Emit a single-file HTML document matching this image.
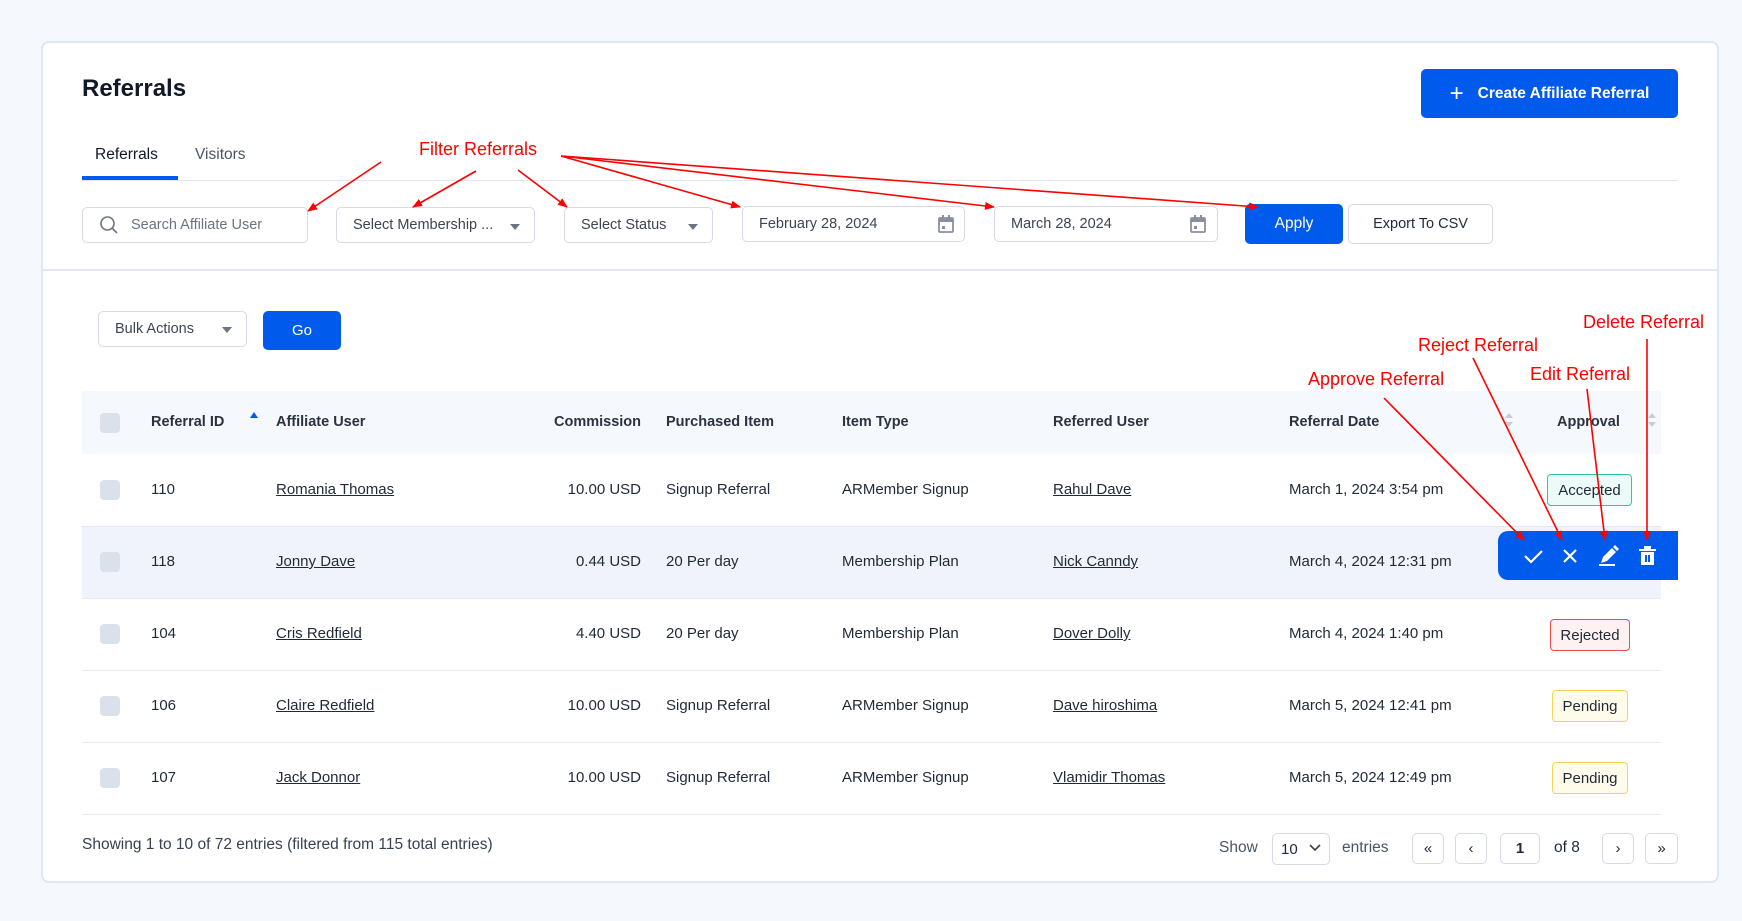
<!DOCTYPE html>
<html><head><meta charset="utf-8">
<style>
*{box-sizing:border-box;margin:0;padding:0}
body{width:1742px;height:921px;background:#f5f8fd;font-family:"Liberation Sans",sans-serif;color:#1f2937;position:relative;overflow:hidden;font-size:15px}
.a{position:absolute}
.card{left:41px;top:41px;width:1678px;height:842px;background:#fff;border:2px solid #dfe7f3;border-radius:8px}
.box{position:absolute;border:1px solid #d5dae4;border-radius:5px;background:#fff;display:flex;align-items:center;color:#3d4452;font-size:14.5px}
.btn{position:absolute;background:#005aeb;color:#fff;border-radius:5px;display:flex;align-items:center;justify-content:center;font-weight:bold}
.caret{position:absolute;width:0;height:0;border-left:5px solid transparent;border-right:5px solid transparent;border-top:6px solid #6b7280}
.th{position:absolute;top:414px;font-weight:bold;font-size:14.5px;color:#2b3340}
.cb{position:absolute;left:100px;width:20px;height:20px;border-radius:4px;background:#dbe1eb}
.td{position:absolute;font-size:15px;color:#1f2937}
.u{text-decoration:underline}
.badge{position:absolute;border-radius:4px;font-size:15px;display:flex;align-items:center;justify-content:center;height:32px}
.pg{position:absolute;top:833px;height:31px;border:1px solid #d5dae4;border-radius:5px;display:flex;align-items:center;justify-content:center;font-size:15px;color:#1f2937}
</style></head><body>
<div class="a card"></div>
<div class="a" style="left:82px;top:75px;font-size:24px;font-weight:bold;color:#111827">Referrals</div>
<div class="btn" style="left:1421px;top:69px;width:257px;height:49px;font-size:15.5px"><span style="font-size:24px;font-weight:normal;margin-right:14px">+</span>Create Affiliate Referral</div>
<div class="a" style="left:95px;top:146px;font-size:15.5px;color:#111827">Referrals</div>
<div class="a" style="left:195px;top:146px;font-size:15.5px;color:#4b5563">Visitors</div>
<div class="a" style="left:82px;top:180px;width:1596px;height:1px;background:#e2e6ee"></div>
<div class="a" style="left:82px;top:176px;width:96px;height:4px;background:#005aeb"></div>

<div class="box" style="left:82px;top:207px;width:226px;height:36px;padding-left:48px;color:#6b7280">Search Affiliate User</div>
<svg class="a" style="left:99px;top:215px" width="20" height="20" viewBox="0 0 20 20"><circle cx="8.5" cy="8.5" r="6.5" fill="none" stroke="#6b7280" stroke-width="1.6"/><line x1="13.3" y1="13.3" x2="18" y2="18" stroke="#6b7280" stroke-width="1.6"/></svg>
<div class="box" style="left:336px;top:207px;width:199px;height:36px;padding-left:16px">Select Membership ...</div>
<div class="caret" style="left:510px;top:224px"></div>
<div class="box" style="left:564px;top:207px;width:149px;height:36px;padding-left:16px">Select Status</div>
<div class="caret" style="left:688px;top:224px"></div>
<div class="box" style="left:742px;top:206px;width:223px;height:36px;padding-left:16px">February 28, 2024</div>
<div class="box" style="left:994px;top:206px;width:224px;height:36px;padding-left:16px">March 28, 2024</div>
<svg class="a" style="left:938px;top:215px" width="16" height="18" viewBox="0 0 16 18"><rect x="1" y="3" width="14" height="14" rx="1" fill="none" stroke="#8a8fa0" stroke-width="1.8"/><rect x="1" y="3" width="14" height="4" fill="#8a8fa0"/><rect x="4" y="0" width="2" height="4" fill="#8a8fa0"/><rect x="10" y="0" width="2" height="4" fill="#8a8fa0"/><rect x="4" y="11" width="3" height="3" fill="#8a8fa0"/></svg>
<svg class="a" style="left:1190px;top:215px" width="16" height="18" viewBox="0 0 16 18"><rect x="1" y="3" width="14" height="14" rx="1" fill="none" stroke="#8a8fa0" stroke-width="1.8"/><rect x="1" y="3" width="14" height="4" fill="#8a8fa0"/><rect x="4" y="0" width="2" height="4" fill="#8a8fa0"/><rect x="10" y="0" width="2" height="4" fill="#8a8fa0"/><rect x="4" y="11" width="3" height="3" fill="#8a8fa0"/></svg>
<div class="btn" style="left:1245px;top:204px;width:98px;height:40px;font-weight:normal;font-size:15.5px">Apply</div>
<div class="box" style="left:1348px;top:204px;width:145px;height:40px;justify-content:center;color:#1f2937">Export To CSV</div>

<div class="a" style="left:43px;top:269px;width:1674px;height:2px;background:#dfe7f3"></div>

<div class="box" style="left:98px;top:311px;width:149px;height:36px;padding-left:16px">Bulk Actions</div>
<div class="caret" style="left:222px;top:327px"></div>
<div class="btn" style="left:263px;top:311px;width:78px;height:39px;font-weight:normal;font-size:15px">Go</div>

<div class="a" style="left:82px;top:391px;width:1579px;height:63px;background:#f5f8fd"></div>
<div class="cb" style="top:413px"></div>
<div class="th" style="left:151px">Referral ID</div>
<div class="a" style="left:250px;top:412px;width:0;height:0;border-left:4px solid transparent;border-right:4px solid transparent;border-bottom:6px solid #005aeb"></div>
<div class="th" style="left:276px">Affiliate User</div>
<div class="th" style="left:540px;width:101px;text-align:right">Commission</div>
<div class="th" style="left:666px">Purchased Item</div>
<div class="th" style="left:842px">Item Type</div>
<div class="th" style="left:1053px">Referred User</div>
<div class="th" style="left:1289px">Referral Date</div>
<div class="th" style="left:1557px">Approval</div>
<svg class="a" style="left:1505px;top:413px" width="8" height="14"><path d="M4 0L8 5H0Z M4 14L8 9H0Z" fill="#c8ccd6"/></svg>
<svg class="a" style="left:1648px;top:413px" width="8" height="14"><path d="M4 0L8 5H0Z M4 14L8 9H0Z" fill="#c8ccd6"/></svg>

<!-- rows -->
<div class="a" style="left:82px;top:526px;width:1579px;height:72px;background:#f0f3fb;border-top:1px solid #e1e8f5"></div>
<div class="a" style="left:82px;top:670px;width:1579px;height:1px;background:#e7ebf2"></div>
<div class="a" style="left:82px;top:742px;width:1579px;height:1px;background:#e7ebf2"></div>
<div class="a" style="left:82px;top:814px;width:1579px;height:1px;background:#e7ebf2"></div>
<div class="a" style="left:82px;top:598px;width:1579px;height:1px;background:#e7ebf2"></div>

<div class="cb" style="top:480px"></div><div class="td" style="left:151px;top:481px">110</div><div class="td u" style="left:276px;top:481px">Romania Thomas</div><div class="td" style="left:540px;top:481px;width:101px;text-align:right">10.00 USD</div><div class="td" style="left:666px;top:481px">Signup Referral</div><div class="td" style="left:842px;top:481px">ARMember Signup</div><div class="td u" style="left:1053px;top:481px">Rahul Dave</div><div class="td" style="left:1289px;top:481px">March 1, 2024 3:54 pm</div>
<div class="badge" style="left:1547px;top:474px;width:85px;background:#ecfbf7;border:1.5px solid #2fc7a3">Accepted</div>

<div class="cb" style="top:552px"></div><div class="td" style="left:151px;top:553px">118</div><div class="td u" style="left:276px;top:553px">Jonny Dave</div><div class="td" style="left:540px;top:553px;width:101px;text-align:right">0.44 USD</div><div class="td" style="left:666px;top:553px">20 Per day</div><div class="td" style="left:842px;top:553px">Membership Plan</div><div class="td u" style="left:1053px;top:553px">Nick Canndy</div><div class="td" style="left:1289px;top:553px">March 4, 2024 12:31 pm</div>
<div class="a" style="left:1498px;top:531px;width:180px;height:49px;background:#005aeb;border-radius:10px 0 0 10px"></div>
<svg class="a" style="left:1498px;top:531px" width="180" height="49" viewBox="0 0 180 49">
<path d="M27 25l6 6 11-11" fill="none" stroke="#fff" stroke-width="2.2"/>
<path d="M66 19l12 12M78 19l-12 12" fill="none" stroke="#fff" stroke-width="2.2"/>
<path d="M103 32l2-6 9-9 4 4-9 9z M115 16l2-2 4 4-2 2z" fill="#fff"/><rect x="101" y="33" width="16" height="2" fill="#fff"/>
<path d="M141 18h17v2h-17z M146 15h7v3h-7z M143 21h13v13h-13z" fill="#fff"/><rect x="147" y="24" width="2" height="7" fill="#005aeb"/><rect x="150" y="24" width="2" height="7" fill="#005aeb"/>
</svg>

<div class="cb" style="top:624px"></div><div class="td" style="left:151px;top:625px">104</div><div class="td u" style="left:276px;top:625px">Cris Redfield</div><div class="td" style="left:540px;top:625px;width:101px;text-align:right">4.40 USD</div><div class="td" style="left:666px;top:625px">20 Per day</div><div class="td" style="left:842px;top:625px">Membership Plan</div><div class="td u" style="left:1053px;top:625px">Dover Dolly</div><div class="td" style="left:1289px;top:625px">March 4, 2024 1:40 pm</div>
<div class="badge" style="left:1550px;top:619px;width:80px;background:#fff1f1;border:1.5px solid #ef4b4b">Rejected</div>

<div class="cb" style="top:696px"></div><div class="td" style="left:151px;top:697px">106</div><div class="td u" style="left:276px;top:697px">Claire Redfield</div><div class="td" style="left:540px;top:697px;width:101px;text-align:right">10.00 USD</div><div class="td" style="left:666px;top:697px">Signup Referral</div><div class="td" style="left:842px;top:697px">ARMember Signup</div><div class="td u" style="left:1053px;top:697px">Dave hiroshima</div><div class="td" style="left:1289px;top:697px">March 5, 2024 12:41 pm</div>
<div class="badge" style="left:1552px;top:690px;width:76px;background:#fffbea;border:1.5px solid #f2d45c">Pending</div>

<div class="cb" style="top:768px"></div><div class="td" style="left:151px;top:769px">107</div><div class="td u" style="left:276px;top:769px">Jack Donnor</div><div class="td" style="left:540px;top:769px;width:101px;text-align:right">10.00 USD</div><div class="td" style="left:666px;top:769px">Signup Referral</div><div class="td" style="left:842px;top:769px">ARMember Signup</div><div class="td u" style="left:1053px;top:769px">Vlamidir Thomas</div><div class="td" style="left:1289px;top:769px">March 5, 2024 12:49 pm</div>
<div class="badge" style="left:1552px;top:762px;width:76px;background:#fffbea;border:1.5px solid #f2d45c">Pending</div>

<!-- footer -->
<div class="a" style="left:82px;top:836px;font-size:15.5px;color:#374151">Showing 1 to 10 of 72 entries (filtered from 115 total entries)</div>
<div class="a" style="left:1219px;top:839px;font-size:15.5px;color:#4b5563">Show</div>
<div class="pg" style="left:1272px;width:58px;justify-content:flex-start;padding-left:8px;height:32px">10</div>
<svg class="a" style="left:1309px;top:844px" width="12" height="8"><path d="M1 1l5 5 5-5" fill="none" stroke="#374151" stroke-width="1.6"/></svg>
<div class="a" style="left:1342px;top:839px;font-size:15.5px;color:#4b5563">entries</div>
<div class="pg" style="left:1412px;width:32px">«</div>
<div class="pg" style="left:1455px;width:32px">‹</div>
<div class="pg" style="left:1500px;width:40px;font-weight:bold">1</div>
<div class="a" style="left:1554px;top:839px;font-size:15.5px">of 8</div>
<div class="pg" style="left:1602px;width:32px">›</div>
<div class="pg" style="left:1645px;width:33px">»</div>

<!-- annotations -->
<svg class="a" style="left:0;top:0" width="1742" height="921">
<defs><marker id="m" markerWidth="10" markerHeight="8" refX="9" refY="4" orient="auto" markerUnits="userSpaceOnUse"><path d="M0 0L10 4L0 8z" fill="#f00"/></marker></defs>
<g stroke="#f00" stroke-width="1.6" fill="none" marker-end="url(#m)">
<line x1="381" y1="162" x2="308" y2="211"/>
<line x1="476" y1="171" x2="413" y2="207"/>
<line x1="518" y1="170" x2="567" y2="207"/>
<line x1="561" y1="156" x2="740" y2="207"/>
<line x1="561" y1="156" x2="994" y2="207"/>
<line x1="561" y1="156" x2="1258" y2="207"/>
<line x1="1384" y1="398" x2="1524" y2="540"/>
<line x1="1473" y1="358" x2="1562" y2="540"/>
<line x1="1587" y1="389" x2="1605" y2="540"/>
<line x1="1647" y1="339" x2="1647" y2="540"/>
</g>
<g fill="#f00" font-family="Liberation Sans, sans-serif" font-size="18">
<text x="419" y="155">Filter Referrals</text>
<text x="1308" y="385">Approve Referral</text>
<text x="1418" y="351">Reject Referral</text>
<text x="1530" y="380">Edit Referral</text>
<text x="1583" y="328">Delete Referral</text>
</g>
</svg>
</body></html>
